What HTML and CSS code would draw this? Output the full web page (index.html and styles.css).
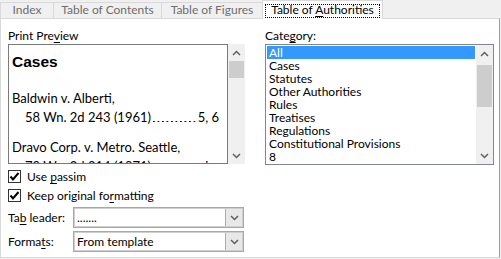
FILE: index.html
```html
<!DOCTYPE html>
<html lang="en">

<head>
    <meta charset="UTF-8">
    <meta name="viewport" content="width=device-width, initial-scale=1">
    <title>Index and Tables</title>
    <link rel="stylesheet" href="styles.css">
</head>

<body>
    <div class="dialog">
        <div class="tabs">
            <div class="tab tab-index">Index</div>
            <div class="tab tab-toc">Table of Contents</div>
            <div class="tab tab-tof">Table of Figures</div>
            <div class="tab active"><span class="focus">Table of <u>A</u>uthorities</span></div>
        </div>

        <div class="panel">
            <div class="column column-left">
                <div class="label">Print Pre<u>v</u>iew</div>
                <div class="preview-box">
                    <div class="preview">
                        <div class="preview-heading">Cases</div>
                        <div class="entry">
                            <div>Baldwin v. Alberti,</div>
                            <div class="cite">
                                <span>58 Wn. 2d 243 (1961)</span><span class="leader"></span><span>5, 6</span>
                            </div>
                        </div>
                        <div class="entry">
                            <div>Dravo Corp. v. Metro. Seattle,</div>
                            <div class="cite">
                                <span>79 Wn. 2d 214 (1971)</span><span class="leader"></span><span>passim</span>
                            </div>
                        </div>
                    </div>
                    <div class="scrollbar">
                        <div class="scroll-btn">
                            <svg width="9" height="6" viewBox="0 0 9 6"><polyline points="1,5 4.5,1.5 8,5" /></svg>
                        </div>
                        <div class="track"><div class="thumb thumb-preview"></div></div>
                        <div class="scroll-btn">
                            <svg width="9" height="6" viewBox="0 0 9 6"><polyline points="1,1 4.5,4.5 8,1" /></svg>
                        </div>
                    </div>
                </div>

                <div class="check check-first">
                    <span class="box"><svg width="11" height="11" viewBox="0 0 11 11"><polyline points="1.5,5.5 4,8.5 9.5,2" /></svg></span>
                    <span>Use <u>p</u>assim</span>
                </div>
                <div class="check">
                    <span class="box"><svg width="11" height="11" viewBox="0 0 11 11"><polyline points="1.5,5.5 4,8.5 9.5,2" /></svg></span>
                    <span>Keep original fo<u>r</u>matting</span>
                </div>

                <div class="field field-first">
                    <span class="field-label">Ta<u>b</u> leader:</span>
                    <div class="combo">
                        <span class="combo-value">.......</span>
                        <span class="combo-drop">
                            <svg width="9" height="6" viewBox="0 0 9 6"><polyline points="1,1 4.5,4.5 8,1" /></svg>
                        </span>
                    </div>
                </div>
                <div class="field">
                    <span class="field-label">Forma<u>t</u>s:</span>
                    <div class="combo">
                        <span class="combo-value">From template</span>
                        <span class="combo-drop">
                            <svg width="9" height="6" viewBox="0 0 9 6"><polyline points="1,1 4.5,4.5 8,1" /></svg>
                        </span>
                    </div>
                </div>
            </div>

            <div class="column column-right">
                <div class="label">Cate<u>g</u>ory:</div>
                <div class="listbox">
                    <div class="items">
                        <div class="item selected">All</div>
                        <div class="item">Cases</div>
                        <div class="item">Statutes</div>
                        <div class="item">Other Authorities</div>
                        <div class="item">Rules</div>
                        <div class="item">Treatises</div>
                        <div class="item">Regulations</div>
                        <div class="item">Constitutional Provisions</div>
                        <div class="item">8</div>
                    </div>
                    <div class="scrollbar">
                        <div class="scroll-btn">
                            <svg width="9" height="6" viewBox="0 0 9 6"><polyline points="1,5 4.5,1.5 8,5" /></svg>
                        </div>
                        <div class="track"><div class="thumb thumb-list"></div></div>
                        <div class="scroll-btn">
                            <svg width="9" height="6" viewBox="0 0 9 6"><polyline points="1,1 4.5,4.5 8,1" /></svg>
                        </div>
                    </div>
                </div>
            </div>
        </div>
    </div>
</body>

</html>
```

FILE: styles.css
```css
* {
    box-sizing: border-box;
}

body {
    margin: 0;
    background: #f0f0f0;
    font-family: Lato, "Noto Sans", sans-serif;
    font-size: 12px;
    color: #000;
}

u {
    text-underline-offset: 2px;
}

.dialog {
    width: 501px;
    height: 259px;
}

/* Tab strip */
.tabs {
    display: flex;
    align-items: flex-end;
    height: 18px;
}

.tab {
    height: 16px;
    margin-right: -1px;
    border: 1px solid #d9d9d9;
    border-bottom: none;
    background: #f0f0f0;
    color: #6d6d6d;
    line-height: 13px;
    text-align: center;
    white-space: nowrap;
}

.tab-index {
    width: 54px;
}

.tab-toc {
    width: 109px;
}

.tab-tof {
    width: 102px;
}

.tab.active {
    position: relative;
    z-index: 1;
    width: 121px;
    height: 19px;
    margin-bottom: -1px;
    padding-top: 2px;
    background: #fff;
    color: #000;
}

.focus {
    display: inline-block;
    padding: 0 5px 2px;
    border: 1px dotted #000;
    line-height: 10px;
}

/* Page */
.panel {
    display: flex;
    gap: 20px;
    width: 500px;
    height: 240px;
    padding: 9px 0 0 7px;
    border: 1px solid #d9d9d9;
    border-right-color: #a0a0a0;
    background: #fff;
}

.column-left {
    width: 237px;
}

.column-right {
    width: 229px;
}

.label {
    height: 15px;
    margin-bottom: 1px;
    line-height: 15px;
}

/* Print preview */
.preview-box {
    display: flex;
    height: 120px;
}

.preview {
    width: 220px;
    padding: 7px 8px 0 3px;
    overflow: hidden;
    border: 1px solid #7a7a7a;
    font-size: 13px;
    line-height: 19px;
}

.preview-heading {
    margin-bottom: 17px;
    font-family: "Liberation Sans", Arial, sans-serif;
    font-size: 15.5px;
    font-weight: bold;
    line-height: 20px;
}

.entry {
    margin-bottom: 11px;
}

.cite {
    display: flex;
    padding-left: 13px;
    white-space: nowrap;
}

/* tab leader dots up to the page numbers */
.leader {
    flex: 1;
    margin: 0 1px 0 2px;
    background-image: linear-gradient(to right, #111 1.4px, transparent 1.4px);
    background-size: 4.5px 1.4px;
    background-position: 0 13px;
    background-repeat: repeat-x;
}

/* Scrollbars */
.scrollbar {
    display: flex;
    flex-direction: column;
    width: 17px;
    background: #f0f0f0;
}

.scroll-btn {
    display: flex;
    align-items: center;
    justify-content: center;
    height: 17px;
}

.scrollbar svg,
.combo-drop svg {
    fill: none;
    stroke: #606060;
    stroke-width: 1.5;
}

.track {
    flex: 1;
    padding: 0 1px;
}

.thumb {
    background: #cdcdcd;
}

.thumb-preview {
    height: 17px;
}

.thumb-list {
    height: 42px;
    margin-top: 3px;
}

/* Checkboxes */
.check {
    display: flex;
    align-items: center;
    height: 19px;
    line-height: 19px;
}

.check-first {
    margin-top: 3px;
}

.box {
    display: flex;
    align-items: center;
    justify-content: center;
    width: 13px;
    height: 13px;
    margin-right: 6px;
    border: 1px solid #333;
    background: #fff;
}

.box svg {
    fill: none;
    stroke: #000;
    stroke-width: 2;
}

/* Combo fields */
.field {
    display: flex;
    align-items: center;
    margin-top: 3px;
}

.field-first {
    margin-top: 2px;
}

.field-label {
    width: 65px;
}

.combo {
    display: flex;
    width: 171px;
    height: 21px;
    border: 1px solid #a8a8a8;
    box-shadow: inset 0 0 0 1px #cfcfcf;
    background: #fff;
}

.combo-value {
    flex: 1;
    padding-left: 3px;
    line-height: 19px;
}

.combo-drop {
    display: flex;
    align-items: center;
    justify-content: center;
    width: 17px;
    margin: 1px 1px 1px 0;
    border-left: 1px solid #adadad;
    background: #e8e8e8;
}

/* Category list */
.listbox {
    display: flex;
    height: 121px;
    border: 1px solid #828790;
    background: #fff;
}

.items {
    flex: 1;
    padding: 1px;
    overflow: hidden;
}

.item {
    height: 13px;
    padding-left: 2px;
    line-height: 13px;
    white-space: nowrap;
}

.item.selected {
    background: #3399ff;
    color: #fff;
}
```
